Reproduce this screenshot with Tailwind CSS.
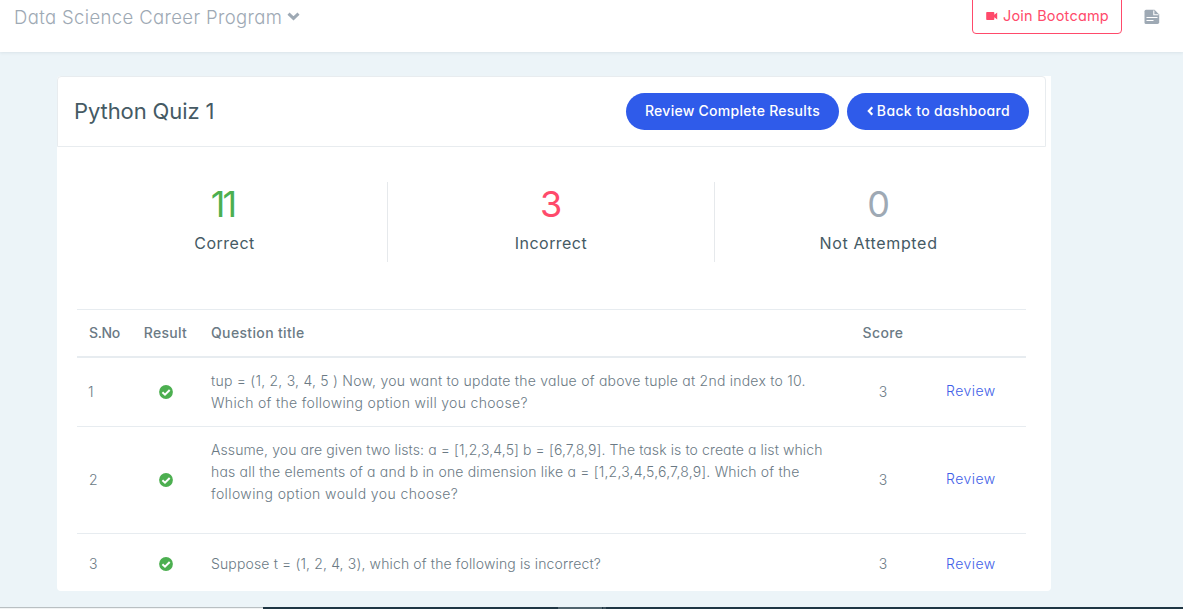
<!DOCTYPE html>
<html lang="en"><head><meta charset="utf-8"><title>Python Quiz 1</title>
<script src="https://cdn.jsdelivr.net/npm/@tailwindcss/browser@4"></script></head>
<body class="h-[609px] overflow-hidden bg-[#ecf4f8] font-['Inter',sans-serif] [font-feature-settings:'cv11'] text-[14px] leading-[22px] font-light whitespace-nowrap text-[#6b7a85] flex flex-col">
<svg class="hidden">
  <symbol id="check" viewBox="0 0 14 14"><circle cx="7" cy="7" r="6.9" fill="#4caf50"/><path d="M3.4 7.2 6 9.7 10.700 5" fill="none" stroke="#fff" stroke-width="2"/></symbol>
</svg>
<header class="h-[52px] shrink-0 bg-white shadow-[0_1px_3px_rgba(60,90,110,0.10)] flex items-start pl-[14px] pr-[23px]">
  <div class="flex items-center h-[33px] text-[18.5px] tracking-[0.37px] text-[#9ea9b4]">Data Science Career Program
    <svg class="ml-[5px] -mt-px" width="13" height="9" viewBox="0 0 13 9"><path d="M1.500 1.700 6.500 6.400 11.500 1.700" fill="none" stroke="#9ea9b4" stroke-width="3"/></svg>
  </div>
  <button class="ml-auto w-[150px] h-[38px] -mt-[4px] pt-px border border-[#ff4a6b] rounded-[4px] text-[#ff4a6b] text-[14.5px] font-normal tracking-[0.2px] flex items-center pl-[13px]">
    <svg class="mr-[5px]" width="12" height="8" viewBox="0 0 12 8" fill="#ff4a6b"><path d="M1 0h6.500q.8 0 .8.8V2.700L11.200.4v7.200L8.300 5.300V7.200q0 .8-.8.8H1q-.8 0-.8-.8V.8Q.2 0 1 0Z"/></svg>Join Bootcamp
  </button>
  <svg class="ml-[22px] mt-[9px]" width="16" height="16" viewBox="0 0 16 16"><path d="M2 .8h8.500L15.200 5.500V13.200q0 1.700-1.700 1.700H2Q.5 14.900.5 13.400V2.300Q.5.8 2 .8Z" fill="#9ea9b4"/><path d="M9.800 1.500V5.700H14.500M2.500 8.500H13.500M2.500 11.500H9.500" fill="none" stroke="#fff" stroke-width="1.100"/></svg>
</header>
<main class="mt-[24px] ml-[57px] w-[994px] h-[515px] shrink-0 bg-white rounded-b-[4px] rounded-tl-[4px]">
  <div class="w-[989px] h-[71px] border border-[#e8ecef] rounded-t-[4px] flex items-center pl-[16px] pr-[16px]">
    <h1 class="text-[22px] font-normal tracking-[-0.1px] text-[#455a64] pb-[2px]">Python Quiz 1</h1>
    <button class="ml-auto w-[213px] h-[37px] pb-[2px] rounded-full bg-[#2f5bea] text-white font-medium tracking-[0.27px]">Review Complete Results</button>
    <button class="ml-[8px] w-[182px] h-[37px] pb-[2px] rounded-full bg-[#2f5bea] text-white font-medium tracking-[0.36px] flex items-center justify-center">
      <svg class="mr-[3px]" width="8" height="10" viewBox="0 0 8 10"><path d="M6.300 1.300 2.800 5 6.300 8.700" fill="none" stroke="#fff" stroke-width="2.200"/></svg>Back to dashboard</button>
  </div>
  <section class="mt-[35px] ml-[4px] w-[981px] grid grid-cols-3 h-[80px] text-center text-[16px] font-normal text-[#455a64]">
    <div class="border-r border-[#e6e9ec]"><div class="pr-[3px] text-[36px] leading-[44px] text-[#4caf50] tracking-[-3px]">11</div><div class="mt-[6px] pl-px tracking-[0.5px]">Correct</div></div>
    <div class="border-r border-[#e6e9ec]"><div class="text-[36px] leading-[44px] text-[#ff4a6b]">3</div><div class="mt-[6px] tracking-[0.45px]">Incorrect</div></div>
    <div><div class="text-[36px] leading-[44px] text-[#9ea9b4]">0</div><div class="mt-[6px] tracking-[0.68px]">Not Attempted</div></div>
  </section>
  <section class="mt-[47px] ml-[20px] w-[949px] border-t border-[#e7ecf0]">
    <div class="grid grid-cols-[56px_65px_641px_88px_99px] items-center h-[48px] border-b-2 border-[#e7ecf0] font-medium">
      <span class="pl-[12px] tracking-[-0.4px]">S.No</span><span class="text-center tracking-[0.3px]">Result</span><span class="pl-[13px] tracking-[0.35px]">Question title</span><span class="text-center tracking-[0.4px]">Score</span><span></span>
    </div>
    <div class="grid grid-cols-[56px_65px_641px_88px_99px] items-center h-[69px] border-b border-[#e7ecf0]">
      <span class="pl-[11px]">1</span><svg class="ml-[25.5px]" width="14" height="14"><use href="#check"/></svg>
      <p class="pl-[13px]"><span class="block tracking-[0.235px]">tup = (1, 2, 3, 4, 5 ) Now, you want to update the value of above tuple at 2nd index to 10.</span><span class="block tracking-[0.32px]">Which of the following option will you choose?</span></p>
      <span class="text-center">3</span><a class="pl-[19px] pb-[2px] text-[#3f5fe8] font-[350] tracking-[0.45px]">Review</a>
    </div>
    <div class="grid grid-cols-[56px_65px_641px_88px_99px] items-center h-[107px] border-b border-[#e7ecf0]">
      <span class="pl-[12px]">2</span><svg class="ml-[25.5px]" width="14" height="14"><use href="#check"/></svg>
      <p class="pl-[13px] pb-[16px]"><span class="block tracking-[0.1px]">Assume, you are given two lists: a = [1,2,3,4,5] b = [6,7,8,9]. The task is to create a list which</span><span class="block tracking-[0.19px]">has all the elements of a and b in one dimension like a = [1,2,3,4,5,6,7,8,9]. Which of the</span><span class="block tracking-[0.4px]">following option would you choose?</span></p>
      <span class="text-center">3</span><a class="pl-[19px] pb-[2px] text-[#3f5fe8] font-[350] tracking-[0.45px]">Review</a>
    </div>
    <div class="grid grid-cols-[56px_65px_641px_88px_99px] items-center h-[60px]">
      <span class="pl-[12px]">3</span><svg class="ml-[25.5px]" width="14" height="14"><use href="#check"/></svg>
      <p class="pl-[13px] tracking-[0.14px]">Suppose t = (1, 2, 4, 3), which of the following is incorrect?</p>
      <span class="text-center">3</span><a class="pl-[19px] text-[#3f5fe8] font-[350] tracking-[0.45px]">Review</a>
    </div>
  </section>
</main>
<footer class="mt-auto h-[2px] shrink-0 flex">
  <div class="w-[263px] bg-[#f1f3f4] border-t border-[#b9bfc2]"></div><div class="w-[295px] bg-[#1f3644]"></div><div class="w-[44px] bg-[#50646e]"></div><div class="w-px bg-[#1f3644]"></div><div class="w-[3px] bg-[#3f535e]"></div><div class="flex-1 bg-[#1f3644]"></div>
</footer>
</body></html>
